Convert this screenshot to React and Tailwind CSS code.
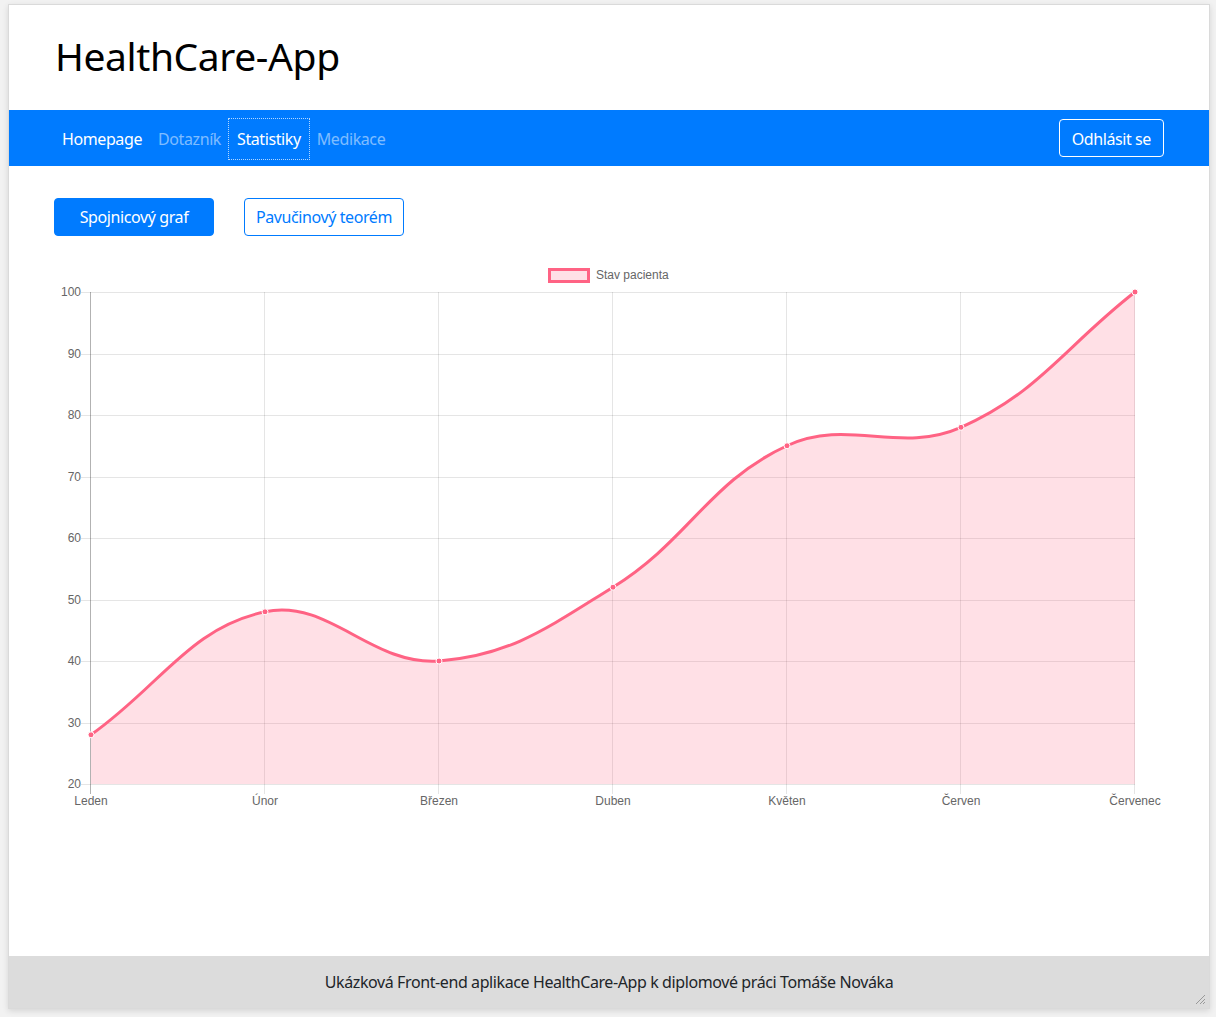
import React from "react";

// Chart data: stav pacienta po měsících
const LABELS = ["Leden", "Únor", "Březen", "Duben", "Květen", "Červen", "Červenec"];
const VALUES = [28, 48, 40, 52, 75, 78, 100];

// chart area in page coordinates (svg uses a matching viewBox)
const AREA = { left: 91, right: 1135, top: 292, bottom: 784 };
const Y_MIN = 20;
const Y_MAX = 100;

const xAt = (i) => AREA.left + (i * (AREA.right - AREA.left)) / (LABELS.length - 1);
const yAt = (v) => AREA.bottom - ((v - Y_MIN) / (Y_MAX - Y_MIN)) * (AREA.bottom - AREA.top);

function buildCurve(points, tension = 0.4) {
  const cps = points.map((p, i) => {
    const prev = points[i - 1] || p;
    const next = points[i + 1] || p;
    const d01 = Math.hypot(p.x - prev.x, p.y - prev.y);
    const d12 = Math.hypot(next.x - p.x, next.y - p.y);
    let s01 = d01 / (d01 + d12);
    let s12 = d12 / (d01 + d12);
    s01 = isNaN(s01) ? 0 : s01;
    s12 = isNaN(s12) ? 0 : s12;
    const fa = tension * s01;
    const fb = tension * s12;
    const clampY = (y) => Math.min(AREA.bottom, Math.max(AREA.top, y));
    return {
      prev: { x: p.x - fa * (next.x - prev.x), y: clampY(p.y - fa * (next.y - prev.y)) },
      next: { x: p.x + fb * (next.x - prev.x), y: clampY(p.y + fb * (next.y - prev.y)) },
    };
  });
  let d = `M ${points[0].x} ${points[0].y}`;
  for (let i = 1; i < points.length; i++) {
    const a = cps[i - 1].next;
    const b = cps[i].prev;
    d += ` C ${a.x} ${a.y} ${b.x} ${b.y} ${points[i].x} ${points[i].y}`;
  }
  return d;
}

function LineChart() {
  const points = VALUES.map((v, i) => ({ x: xAt(i), y: yAt(v) }));
  const curve = buildCurve(points);
  const area = `${curve} L ${AREA.right} ${AREA.bottom} L ${AREA.left} ${AREA.bottom} Z`;
  const yTicks = [100, 90, 80, 70, 60, 50, 40, 30, 20];
  const font = { fontFamily: "'Liberation Sans', Arial, sans-serif", letterSpacing: 0 };

  return (
    <svg width="1110" height="560" viewBox="54 258 1110 560" className="block">
      {/* legend */}
      <rect x="549.5" y="269.5" width="39" height="12" fill="rgba(255,99,132,0.2)" stroke="rgb(255,99,132)" strokeWidth="3" />
      <text x="596" y="279" fontSize="12" fill="#666" style={font}>
        Stav pacienta
      </text>

      {/* horizontal grid + y ticks */}
      {yTicks.map((v) => (
        <g key={v}>
          <line x1={AREA.left - 10} x2={AREA.right} y1={Math.round(yAt(v)) + 0.5} y2={Math.round(yAt(v)) + 0.5} stroke="rgba(0,0,0,0.1)" />
          <text x="81" y={yAt(v) + 4} fontSize="12" fill="#666" textAnchor="end" style={font}>
            {v}
          </text>
        </g>
      ))}

      {/* vertical grid + x ticks */}
      {LABELS.map((l, i) => (
        <g key={l}>
          <line
            x1={Math.round(xAt(i)) - 0.5}
            x2={Math.round(xAt(i)) - 0.5}
            y1={AREA.top}
            y2={AREA.bottom + 10}
            stroke={i === 0 ? "rgba(0,0,0,0.3)" : "rgba(0,0,0,0.1)"}
          />
          <text x={xAt(i)} y="805" fontSize="12" fill="#666" textAnchor="middle" style={font}>
            {l}
          </text>
        </g>
      ))}

      <path d={area} fill="rgba(255,99,132,0.2)" />
      <path d={curve} fill="none" stroke="rgb(255,99,132)" strokeWidth="3" />
      {points.map((p, i) => (
        <circle key={i} cx={p.x} cy={p.y} r="3" fill="rgb(255,99,132)" stroke="#fff" strokeWidth="1" />
      ))}
    </svg>
  );
}

export default function App() {
  return (
    <div
      className="min-h-[1017px] w-full bg-[#f2f2f2] pt-[4px] tracking-[-0.4px] text-[#212529]"
      style={{ fontFamily: "'Noto Sans', 'Open Sans', sans-serif" }}
    >
      <div className="relative ml-[8px] flex h-[1005px] w-[1202px] flex-col border border-[#dadada] bg-white shadow-[0_2px_6px_rgba(0,0,0,0.12)]">
        {/* Header */}
        <header className="flex h-[105px] items-center px-[46px] pb-[4px]">
          <h1 className="text-[39px] leading-none text-black">HealthCare-App</h1>
        </header>

        {/* Navbar */}
        <nav className="flex h-[56px] items-center justify-between bg-[#007bff] pl-[45px] pr-[45px]">
          <div className="flex items-center pt-[1px]">
            <a className="px-2 py-2 text-[16px] leading-6 text-white">Homepage</a>
            <a className="px-2 py-2 text-[16px] leading-6 text-white/50">Dotazník</a>
            <a className="px-2 py-2 text-[16px] leading-6 text-white outline-1 outline-dotted outline-white/70">Statistiky</a>
            <a className="px-2 py-2 text-[16px] leading-6 text-white/50">Medikace</a>
          </div>
          <button className="h-[38px] rounded-[4px] border border-white px-3 pt-[1px] text-[16px] text-white">Odhlásit se</button>
        </nav>

        {/* Content */}
        <main className="px-[45px] pt-[32px]">
          <div className="flex gap-[30px]">
            <button className="h-[38px] w-[160px] rounded-[4px] border border-[#007bff] bg-[#007bff] text-[16px] text-white">
              Spojnicový graf
            </button>
            <button className="h-[38px] w-[160px] rounded-[4px] border border-[#007bff] bg-white text-[16px] text-[#007bff]">
              Pavučinový teorém
            </button>
          </div>
          <div className="mt-[22px]">
            <LineChart />
          </div>
        </main>

        {/* Footer */}
        <footer className="mt-auto flex h-[52px] items-center justify-center bg-[#dcdcdc] text-[16px]">
          Ukázková Front-end aplikace HealthCare-App k diplomové práci Tomáše Nováka
        </footer>

        {/* resize grip */}
        <svg className="absolute bottom-[3px] right-[3px]" width="12" height="12" viewBox="0 0 12 12">
          <path d="M11 2 L2 11 M11 6 L6 11 M11 9 L9 11" stroke="#999" strokeWidth="1" />
        </svg>
      </div>
    </div>
  );
}
